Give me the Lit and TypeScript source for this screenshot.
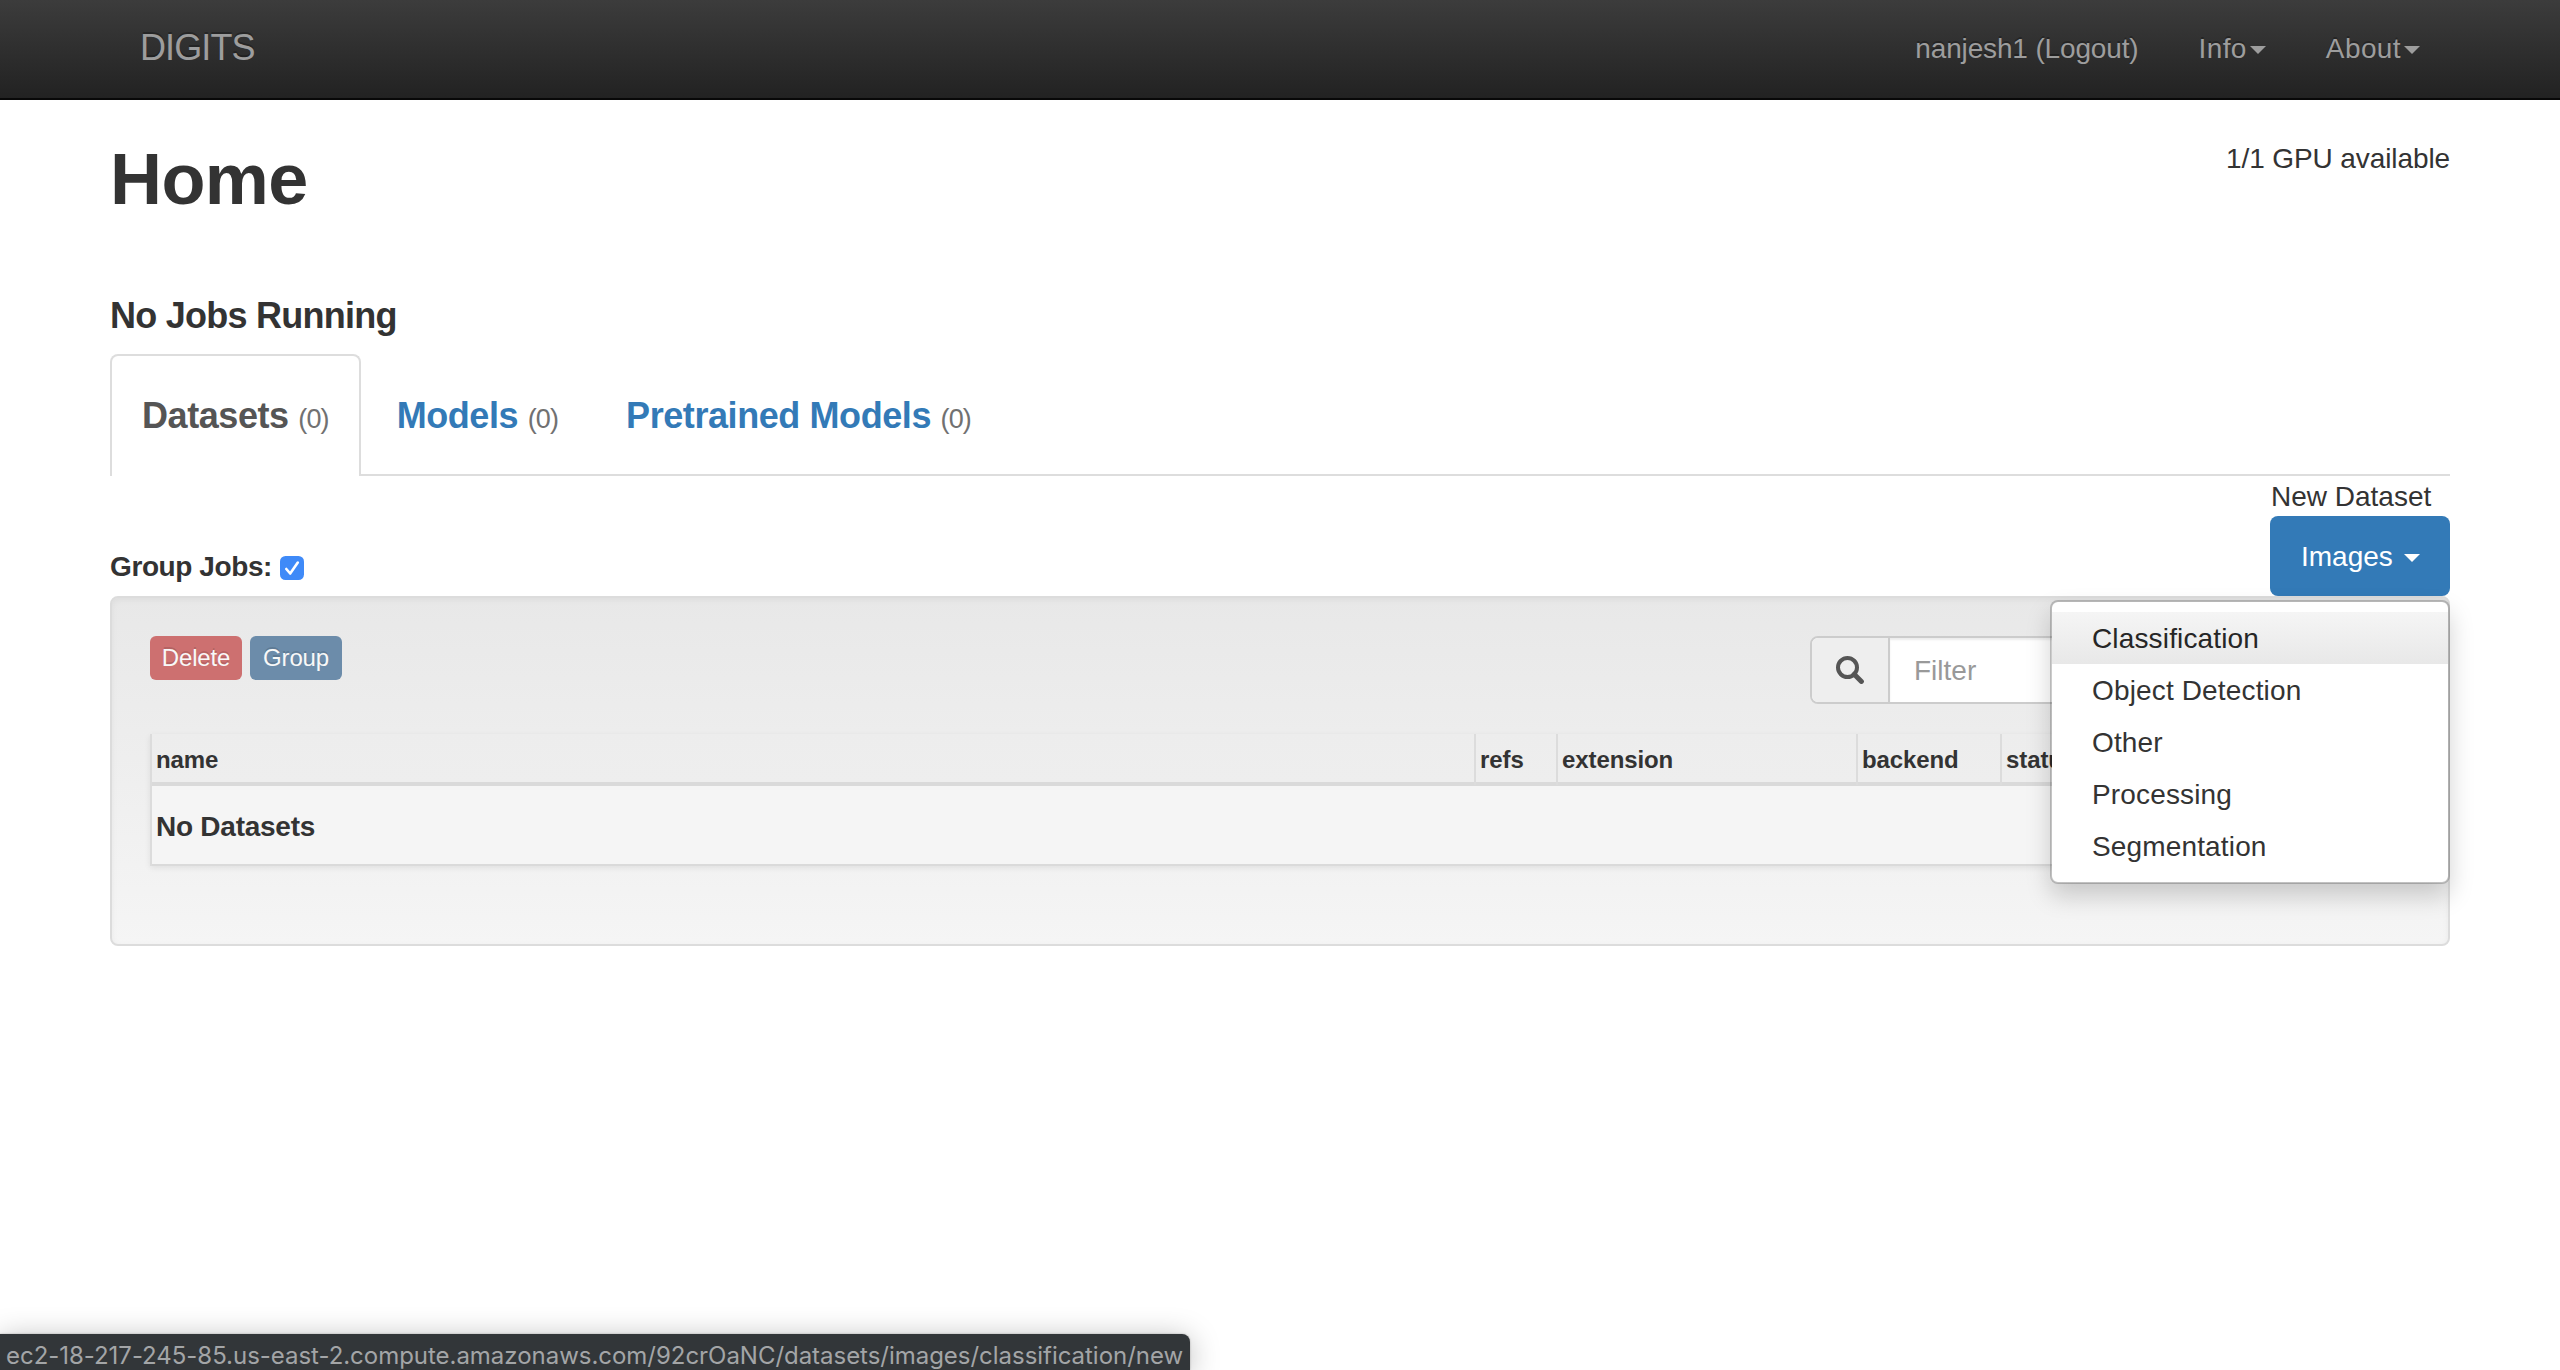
import { LitElement, html, css } from "lit";
import { customElement, property, state } from "lit/decorators.js";

interface Tab {
  label: string;
  count: number;
}

const TABS: Tab[] = [
  { label: "Datasets", count: 0 },
  { label: "Models", count: 0 },
  { label: "Pretrained Models", count: 0 },
];

const COLUMNS = ["name", "refs", "extension", "backend", "status"];

const IMAGE_KINDS = ["Classification", "Object Detection", "Other", "Processing", "Segmentation"];

@customElement("nav-bar")
class NavBar extends LitElement {
  static styles = css`
    :host {
      display: block;
    }
    .bar {
      box-sizing: border-box;
      height: 100px;
      padding: 0 140px;
      display: flex;
      justify-content: space-between;
      border-bottom: 2px solid #080808;
      background: linear-gradient(#3c3c3c, #222);
      color: #9d9d9d;
      text-shadow: 0 -2px 0 rgba(0, 0, 0, 0.25);
    }
    .brand {
      font-size: 36px;
      line-height: 36px;
      padding-top: 30px;
      letter-spacing: -0.9px;
    }
    .links {
      display: flex;
      gap: 60px;
      padding-top: 29px;
      font-size: 28px;
      line-height: 40px;
    }
    .link {
      display: flex;
      align-items: center;
      height: 40px;
      letter-spacing: -0.15px;
    }
    .menu {
      gap: 3px;
      letter-spacing: 0.4px;
    }
    .caret {
      margin-top: 2px;
      border-top: 8px solid currentColor;
      border-left: 8px solid transparent;
      border-right: 8px solid transparent;
    }
  `;

  render() {
    return html`
      <nav class="bar">
        <div class="brand">DIGITS</div>
        <div class="links">
          <div class="link">nanjesh1 (Logout)</div>
          <div class="link menu">Info<span class="caret"></span></div>
          <div class="link menu">About<span class="caret"></span></div>
        </div>
      </nav>
    `;
  }
}

@customElement("job-tabs")
class JobTabs extends LitElement {
  @property({ attribute: false }) tabs: Tab[] = [];
  @property({ type: Number }) active = 0;

  static styles = css`
    :host {
      display: block;
    }
    .tabs {
      display: flex;
      gap: 4px;
      height: 120px;
      border-bottom: 2px solid #ddd;
    }
    .tab {
      box-sizing: border-box;
      height: 122px;
      padding: 40px 30px 0;
      border: 2px solid transparent;
      border-bottom: 0;
      border-radius: 8px 8px 0 0;
      font-size: 36px;
      line-height: 40px;
      font-weight: 700;
      letter-spacing: -0.42px;
      white-space: nowrap;
      color: #337ab7;
    }
    .active {
      color: #555;
      background: #fff;
      border-color: #ddd;
    }
    .count {
      font-size: 27px;
      font-weight: 400;
      letter-spacing: -0.9px;
      color: #717171;
    }
  `;

  render() {
    return html`
      <div class="tabs">
        ${this.tabs.map(
          (t, i) => html`<div class="tab ${i === this.active ? "active" : ""}">
            ${t.label} <span class="count">(${t.count})</span>
          </div>`
        )}
      </div>
    `;
  }
}

@customElement("image-menu")
class ImageMenu extends LitElement {
  @state() private hovered = 0;

  static styles = css`
    :host {
      display: block;
      position: relative;
    }
    .button {
      box-sizing: border-box;
      width: 180px;
      height: 80px;
      padding: 2px 30px 0 31px;
      display: flex;
      align-items: center;
      justify-content: space-between;
      border-radius: 8px;
      background: #337ab7;
      color: #fff;
      font-size: 28px;
      line-height: 40px;
    }
    .caret {
      margin-top: 2px;
      border-top: 8px solid #fff;
      border-left: 8px solid transparent;
      border-right: 8px solid transparent;
    }
    .menu {
      position: absolute;
      z-index: 5;
      top: 84px;
      right: 0;
      box-sizing: border-box;
      width: 400px;
      padding: 10px 0;
      border: 2px solid rgba(0, 0, 0, 0.2);
      border-radius: 8px;
      background: #fff;
      background-clip: padding-box;
      box-shadow: 0 12px 24px rgba(0, 0, 0, 0.175);
    }
    .item {
      height: 52px;
      padding-left: 40px;
      font-size: 28px;
      line-height: 54px;
      letter-spacing: 0.15px;
      color: #333;
    }
    .hovered {
      color: #262626;
      background: linear-gradient(#f5f5f5, #e8e8e8);
    }
  `;

  render() {
    return html`
      <div class="button">Images<span class="caret"></span></div>
      <div class="menu">
        ${IMAGE_KINDS.map(
          (kind, i) => html`<div
            class="item ${i === this.hovered ? "hovered" : ""}"
            @mouseenter=${() => (this.hovered = i)}
          >
            ${kind}
          </div>`
        )}
      </div>
    `;
  }
}

@customElement("job-panel")
class JobPanel extends LitElement {
  static styles = css`
    :host {
      display: block;
    }
    .well {
      box-sizing: border-box;
      height: 350px;
      padding: 38px;
      border: 2px solid #dcdcdc;
      border-radius: 8px;
      background: linear-gradient(#e8e8e8, #f5f5f5);
      box-shadow: inset 0 2px 6px rgba(0, 0, 0, 0.05), 0 2px 0 rgba(255, 255, 255, 0.1);
    }
    .tools {
      display: flex;
      justify-content: space-between;
      align-items: flex-start;
      height: 98px;
    }
    .buttons {
      display: flex;
      gap: 8px;
    }
    .btn {
      width: 92px;
      height: 44px;
      border-radius: 6px;
      text-align: center;
      font-size: 24px;
      line-height: 43px;
      letter-spacing: -0.15px;
      color: #f8f8f8;
      text-shadow: 0 -2px 0 rgba(0, 0, 0, 0.13);
    }
    .delete {
      background: #cd7070;
    }
    .group {
      background: #6c8caa;
    }
    .filter {
      box-sizing: border-box;
      display: flex;
      width: 600px;
      height: 68px;
      border: 2px solid #ccc;
      border-radius: 8px;
      overflow: hidden;
      background: #fff;
    }
    .addon {
      display: flex;
      align-items: center;
      justify-content: center;
      width: 76px;
      border-right: 2px solid #ccc;
      background: #eee;
    }
    .field {
      flex: 1;
      padding-left: 24px;
      font-size: 28px;
      line-height: 65px;
      color: #999;
      box-shadow: inset 0 2px 2px rgba(0, 0, 0, 0.075);
    }
    .table {
      box-shadow: 0 2px 6px rgba(0, 0, 0, 0.08);
      border-left: 2px solid #dcdcdc;
    }
    .head {
      display: grid;
      grid-template-columns: 1322px 82px 300px 144px 1fr;
      height: 48px;
      border-bottom: 4px solid #dadada;
      background: linear-gradient(#ededed, #eeeeee);
    }
    .cell {
      padding-left: 4px;
      font-size: 24px;
      font-weight: 700;
      line-height: 51px;
      letter-spacing: -0.1px;
      color: #333;
    }
    .cell + .cell {
      border-left: 2px solid #dcdcdc;
    }
    .row {
      height: 78px;
      padding-left: 4px;
      border-bottom: 2px solid #dadada;
      background: #f5f5f5;
      font-size: 28px;
      font-weight: 700;
      line-height: 82px;
      letter-spacing: -0.25px;
      color: #333;
    }
  `;

  render() {
    return html`
      <section class="well">
        <div class="tools">
          <div class="buttons">
            <div class="btn delete">Delete</div>
            <div class="btn group">Group</div>
          </div>
          <div class="filter">
            <div class="addon">
              <svg width="28" height="28" viewBox="0 0 28 28" fill="none" stroke="#555">
                <circle cx="11.5" cy="11.5" r="9.5" stroke-width="4" />
                <path d="M18.2 18.2L25.4 25.4" stroke-width="5" stroke-linecap="round" />
              </svg>
            </div>
            <div class="field">Filter</div>
          </div>
        </div>
        <div class="table">
          <div class="head">${COLUMNS.map((c) => html`<div class="cell">${c}</div>`)}</div>
          <div class="row">No Datasets</div>
        </div>
      </section>
    `;
  }
}

@customElement("app-root")
class AppRoot extends LitElement {
  static styles = css`
    :host {
      display: block;
      position: relative;
      box-sizing: border-box;
      height: 1370px;
      overflow: hidden;
      background: #fff;
      color: #333;
      font-family: "Liberation Sans", Arial, Helvetica, sans-serif;
      font-size: 28px;
      line-height: 40px;
    }
    .page {
      padding: 0 110px;
    }
    .header {
      display: flex;
      justify-content: space-between;
      height: 196px;
      padding-top: 38px;
      box-sizing: border-box;
    }
    .title {
      margin: 0;
      padding-top: 1px;
      font-size: 72px;
      line-height: 80px;
      font-weight: 700;
      letter-spacing: -0.6px;
    }
    .gpu {
      padding-top: 1px;
      letter-spacing: -0.1px;
    }
    .status {
      margin: 0;
      height: 58px;
      font-size: 36px;
      line-height: 40px;
      font-weight: 700;
      letter-spacing: -0.75px;
    }
    .toolbar {
      display: flex;
      justify-content: space-between;
      align-items: flex-end;
      height: 120px;
    }
    .toggle {
      display: flex;
      align-items: center;
      gap: 8px;
      padding-bottom: 9px;
      font-weight: 700;
      letter-spacing: -0.4px;
    }
    .check {
      width: 24px;
      height: 24px;
      margin-top: 2px;
    }
    .create {
      width: 180px;
    }
    .caption {
      height: 39px;
      padding: 1px 0 0 1px;
      white-space: nowrap;
    }
    .link-status {
      position: absolute;
      left: 0;
      bottom: 0;
      box-sizing: border-box;
      width: 1190px;
      height: 36px;
      padding-left: 6px;
      border-radius: 0 8px 0 0;
      background: #323639;
      box-shadow: 0 0 2px rgba(0, 0, 0, 0.3), 0 4px 30px rgba(0, 0, 0, 0.28);
      color: #a3a5a7;
      font-family: Inter, sans-serif;
      font-size: 24px;
      line-height: 43px;
      letter-spacing: -0.03px;
      white-space: nowrap;
    }
  `;

  render() {
    return html`
      <nav-bar></nav-bar>
      <main class="page">
        <div class="header">
          <h1 class="title">Home</h1>
          <div class="gpu">1/1 GPU available</div>
        </div>
        <h3 class="status">No Jobs Running</h3>
        <job-tabs .tabs=${TABS}></job-tabs>
        <div class="toolbar">
          <div class="toggle">
            Group Jobs:
            <svg class="check" viewBox="0 0 24 24">
              <rect width="24" height="24" rx="5.5" fill="#3f8af8" />
              <path
                d="M6.3 13L10.2 17.5L17.8 6.5"
                fill="none"
                stroke="#fff"
                stroke-width="2.6"
                stroke-linecap="round"
                stroke-linejoin="round"
              />
            </svg>
          </div>
          <div class="create">
            <div class="caption">New Dataset</div>
            <image-menu></image-menu>
          </div>
        </div>
        <job-panel></job-panel>
      </main>
      <div class="link-status">ec2-18-217-245-85.us-east-2.compute.amazonaws.com/92crOaNC/datasets/images/classification/new</div>
    `;
  }
}
